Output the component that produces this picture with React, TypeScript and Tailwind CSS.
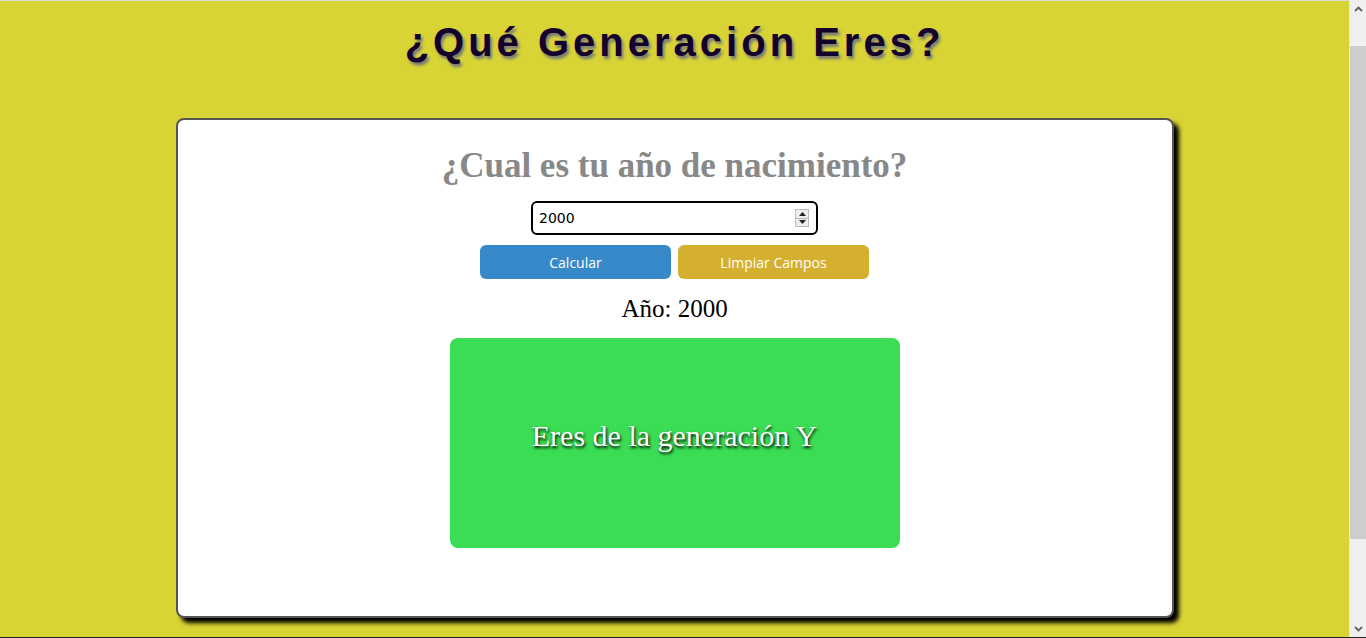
import React, { useState } from 'react';

const getGeneration = (year: number) => {
  if (year >= 1928 && year <= 1945) return 'Silenciosa';
  if (year >= 1946 && year <= 1964) return 'Baby Boomer';
  if (year >= 1965 && year <= 1980) return 'X';
  if (year >= 1981 && year <= 2000) return 'Y';
  if (year >= 2001 && year <= 2010) return 'Z';
  return 'Alfa';
};

const App: React.FC = () => {
  const [value, setValue] = useState('2000');
  const [year, setYear] = useState<number | null>(2000);

  return (
    <div className="h-[638px] flex overflow-hidden border-b border-[#222]">
      <div className="flex-1 bg-[#d8d436] border-t border-[#dcdcdc] font-['Liberation_Sans',Arial,sans-serif]">
        <h1 className="pt-[17px] text-center text-[40px] leading-[48px] font-bold tracking-[4px] text-[#13002b] [text-shadow:2px_3px_3px_#777]">
          ¿Qué Generación Eres?
        </h1>

        <div className="mx-auto mt-[52px] w-[998px] h-[500px] rounded-lg border-2 border-[#555] bg-white shadow-[5px_5px_4px_#000] flex flex-col items-center">
          <h2 className="mt-[26px] text-[35px] leading-[40px] font-bold text-[#888] font-['Liberation_Serif','Times_New_Roman',serif]">
            ¿Cual es tu año de nacimiento?
          </h2>

          <div className="relative mt-[15px]">
            <input
              type="number"
              value={value}
              onChange={(e) => setValue(e.target.value)}
              className="w-[287px] h-[34px] rounded-md border-2 border-black pl-[6px] pr-[28px] text-[14px] text-black font-['DejaVu_Sans',Tahoma,sans-serif] outline-none [appearance:textfield]"
            />
            <div className="absolute right-[9px] top-[8px] w-[14px] h-[18px] flex flex-col border border-[#bbb] bg-[#eee]">
              <div className="flex-1 flex items-center justify-center border-b border-[#bbb]">
                <svg width="7" height="4" viewBox="0 0 7 4"><path d="M3.5 0L7 4H0z" fill="#222" /></svg>
              </div>
              <div className="flex-1 flex items-center justify-center">
                <svg width="7" height="4" viewBox="0 0 7 4"><path d="M0 0h7L3.5 4z" fill="#222" /></svg>
              </div>
            </div>
          </div>

          <div className="mt-[10px] flex gap-[7px]">
            <button
              onClick={() => setYear(parseInt(value, 10) || null)}
              className="w-[191px] h-[34px] rounded-md bg-[#3889ca] text-white text-[14px] font-['Open_Sans',Tahoma,sans-serif]"
            >
              Calcular
            </button>
            <button
              onClick={() => {
                setValue('');
                setYear(null);
              }}
              className="w-[191px] h-[34px] rounded-md bg-[#d5b02e] text-white text-[14px] font-['Open_Sans',Tahoma,sans-serif]"
            >
              Limpiar Campos
            </button>
          </div>

          <p className="mt-[15px] text-[25px] leading-[30px] text-black font-['Liberation_Serif','Times_New_Roman',serif]">
            Año: {year ?? ''}
          </p>

          <div className="mt-[14px] w-[450px] h-[210px] rounded-lg bg-[#3add53] flex items-center justify-center pb-[16px]">
            <span className="text-[30px] text-white font-['Liberation_Serif','Times_New_Roman',serif] [text-shadow:1px_2px_3px_#000]">
              {year ? `Eres de la generación ${getGeneration(year)}` : ''}
            </span>
          </div>
        </div>
      </div>

      <div className="w-[17px] bg-[#f0f0f0] flex flex-col items-stretch border-l border-[#e8e8e8]">
        <div className="h-[17px] flex items-center justify-center">
          <svg width="9" height="6" viewBox="0 0 9 6"><path d="M1 5l3.5-3.5L8 5" stroke="#606060" strokeWidth="1.8" fill="none" /></svg>
        </div>
        <div className="h-[29px]" />
        <div className="h-[493px] bg-[#cdcdcd]" />
        <div className="flex-1" />
        <div className="h-[17px] flex items-center justify-center">
          <svg width="9" height="6" viewBox="0 0 9 6"><path d="M1 1l3.5 3.5L8 1" stroke="#606060" strokeWidth="1.8" fill="none" /></svg>
        </div>
      </div>
    </div>
  );
};

export default App;
